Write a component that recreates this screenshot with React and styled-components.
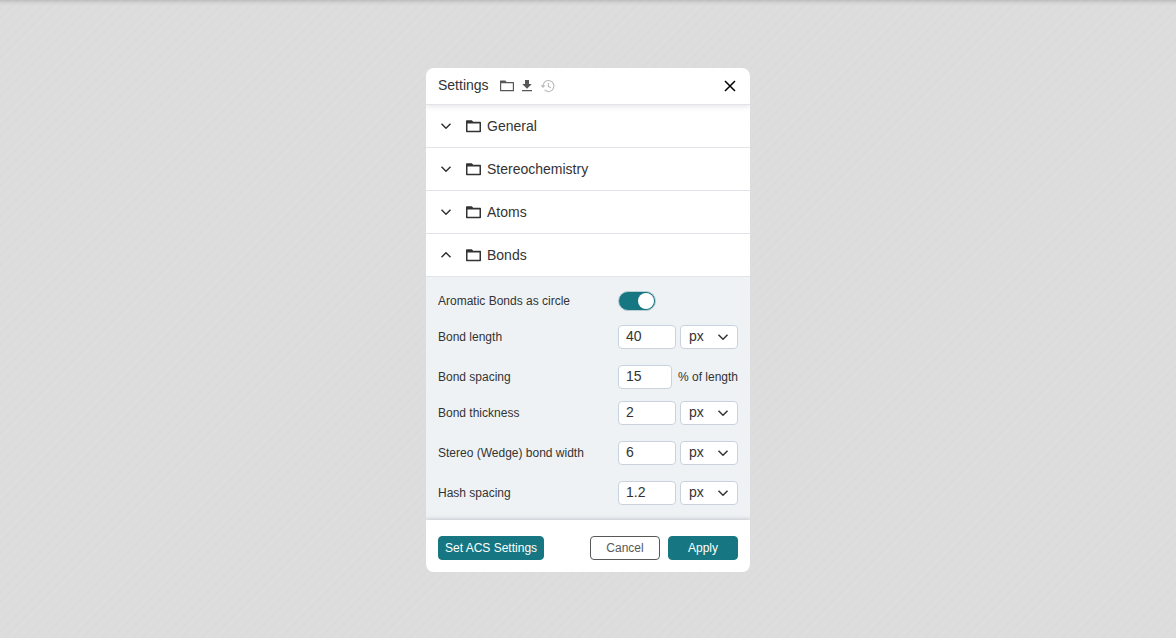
import React, { useState } from "react";
import styled, { createGlobalStyle } from "styled-components";

const ink = "#333333";
const teal = "#167782";
const line = "#e1e5ea";

const GlobalStyle = createGlobalStyle`
  *, *::before, *::after { box-sizing: border-box; }
  body {
    margin: 0;
    font-family: "Liberation Sans", Arial, sans-serif;
    color: ${ink};
  }
  button, input, select { font-family: inherit; color: inherit; margin: 0; }
`;

const Backdrop = styled.main`
  min-height: 100vh;
  display: flex;
  align-items: center;
  justify-content: center;
  padding: 26px 24px 24px;
  background:
    linear-gradient(rgba(0, 0, 0, 0.14), rgba(0, 0, 0, 0.04) 3px, transparent 6px),
    repeating-linear-gradient(
      135deg,
      #dddddd 0,
      #dddddd 4px,
      #dbdbdb 5px,
      #dbdbdb 6px,
      #dddddd 7px
    );
`;

const Dialog = styled.section`
  width: 324px;
  max-width: 100%;
  background: #ffffff;
  border-radius: 8px;
  overflow: hidden;
`;

const Header = styled.header`
  position: relative;
  display: flex;
  align-items: center;
  gap: 11px;
  padding: 0 12px;
  height: 37px;
  border-bottom: 1px solid ${line};
  box-shadow: 0 2px 5px rgba(103, 104, 132, 0.15);
`;

const Title = styled.h1`
  margin: 0;
  padding-bottom: 2px;
  font-size: 14px;
  line-height: 16px;
  font-weight: 400;
`;

const Tools = styled.div`
  display: flex;
  flex: 1;
  gap: 6px;
`;

const IconButton = styled.button`
  display: flex;
  padding: 0;
  border: 0;
  background: none;
  cursor: pointer;
  color: ${(p) => p.$color || "#585858"};
`;

const SectionToggle = styled.button`
  display: flex;
  align-items: center;
  width: 100%;
  height: 43px;
  padding: 0 12px;
  border: 0;
  border-bottom: 1px solid ${line};
  background: none;
  font-size: 14px;
  line-height: 16px;
  text-align: left;
  cursor: pointer;

  svg:first-child { margin: 0 12px 0 0; }
  span { padding-left: 6px; }
`;

const Fields = styled.div`
  display: flex;
  flex-direction: column;
  gap: 12px;
  padding: 12px 12px 11px;
  background: #eff2f5;
`;

const Row = styled.div`
  display: flex;
  align-items: flex-start;
  min-height: ${(p) => (p.$measure ? 28 : 24)}px;
`;

const Label = styled.label`
  flex: 1;
  font-size: 12px;
  line-height: 24px;
`;

const Controls = styled.div`
  display: flex;
  width: 120px;
  gap: ${(p) => p.$gap || 4}px;
`;

const NumberBox = styled.input`
  width: ${(p) => p.$width || 58}px;
  height: 24px;
  padding: 0 7px 2px;
  border: 1px solid #cad3dd;
  border-radius: 4px;
  background: #ffffff;
  font-size: 14px;
  outline: none;
`;

const SelectWrap = styled.div`
  position: relative;
  width: 58px;

  svg {
    position: absolute;
    right: 7px;
    top: 4px;
    pointer-events: none;
  }
`;

const Select = styled.select`
  appearance: none;
  display: block;
  width: 100%;
  height: 24px;
  padding: 0 24px 2px 8px;
  border: 1px solid #cad3dd;
  border-radius: 4px;
  background: #ffffff;
  font-size: 14px;
  outline: none;
`;

const Suffix = styled.span`
  font-size: 12px;
  line-height: 24px;
  white-space: nowrap;
`;

const Switch = styled.input`
  appearance: none;
  display: flex;
  align-items: center;
  width: 38px;
  height: 20px;
  margin: 2px 0 0;
  padding: 1px;
  border: 1px solid #b9cdd4;
  border-radius: 10px;
  background: #9aa5ad;
  cursor: pointer;

  &::before {
    content: "";
    width: 16px;
    height: 16px;
    border-radius: 50%;
    background: #ffffff;
  }

  &:checked {
    justify-content: flex-end;
    background: ${teal};
  }
`;

const Footer = styled.footer`
  position: relative;
  display: flex;
  gap: 8px;
  padding: 16px 12px 12px;
  background: #ffffff;
  box-shadow: 0 -1px 4px rgba(60, 70, 90, 0.25);
`;

const Button = styled.button`
  height: 24px;
  min-width: 70px;
  padding: 0 6px;
  border: 1px solid ${(p) => (p.$outline ? "#585858" : teal)};
  border-radius: 4px;
  background: ${(p) => (p.$outline ? "#ffffff" : teal)};
  color: ${(p) => (p.$outline ? "#585858" : "#ffffff")};
  font-size: 12px;
  line-height: 14px;
  cursor: pointer;
`;

const Spacer = styled.div`
  flex: 1;
`;

const Chevron = ({ up }) => (
  <svg width="16" height="16" viewBox="0 0 16 16" fill="none" stroke="currentColor" strokeWidth="1.5" aria-hidden="true">
    <path d={up ? "M3.5 10.2 8 5.7l4.5 4.5" : "M3.5 5.8 8 10.3l4.5-4.5"} />
  </svg>
);

const FolderIcon = () => (
  <svg width="15" height="16" viewBox="0 0 15 16" aria-hidden="true">
    <path
      fill="currentColor"
      fillRule="evenodd"
      d="M.8 2.200h5l1.400 1.600h7a.8.8 0 0 1 .8.8v8.800a.8.8 0 0 1-.8.8H.8a.8.8 0 0 1-.8-.8V3a.8.8 0 0 1 .8-.8ZM1.500 5.500v7.200h12V5.500Z"
    />
  </svg>
);

const OpenIcon = () => (
  <svg width="14" height="16" viewBox="0 0 14 16" aria-hidden="true">
    <path
      fill="currentColor"
      fillRule="evenodd"
      d="M.6 2.600h4.700l1.300 1.400h6.800a.6.6 0 0 1 .6.6v8.100a.6.6 0 0 1-.6.6H.6a.6.6 0 0 1-.6-.6V3.200a.6.6 0 0 1 .6-.6ZM1.200 5.200v6.900h11.600V5.200Z"
    />
  </svg>
);

const SaveIcon = () => (
  <svg width="14" height="16" viewBox="0 0 14 16" fill="currentColor" aria-hidden="true">
    <path d="M5 2h4v4h2.800L7 10.800 2.200 6H5ZM2 12h10v1.300H2Z" />
  </svg>
);

const HistoryIcon = () => (
  <svg width="16" height="16" viewBox="0 0 16 16" fill="none" stroke="currentColor" strokeWidth="1.200" aria-hidden="true">
    <path d="M3 8a5.500 5.500 0 1 1 1.600 3.900M8.400 5v3.300l2.400 1.400" />
    <path d="M.4 7.200h5.200L3 9.900Z" fill="currentColor" stroke="none" />
  </svg>
);

const CloseIcon = () => (
  <svg width="16" height="16" viewBox="0 0 16 16" fill="none" stroke="currentColor" strokeWidth="1.500" aria-hidden="true">
    <path d="m3 3 10 10M13 3 3 13" />
  </svg>
);

const sections = ["General", "Stereochemistry", "Atoms", "Bonds"];

const fields = [
  { id: "length", label: "Bond length", value: "40" },
  { id: "spacing", label: "Bond spacing", value: "15", suffix: "% of length" },
  { id: "thickness", label: "Bond thickness", value: "2" },
  { id: "wedge", label: "Stereo (Wedge) bond width", value: "6" },
  { id: "hash", label: "Hash spacing", value: "1.2" },
];

const MeasureRow = ({ id, label, value, suffix }) => (
  <Row $measure={!suffix}>
    <Label htmlFor={id}>{label}</Label>
    <Controls $gap={suffix ? 6 : 4}>
      <NumberBox id={id} defaultValue={value} $width={suffix ? 54 : 58} />
      {suffix ? (
        <Suffix>{suffix}</Suffix>
      ) : (
        <SelectWrap>
          <Select aria-label={`${label} unit`} defaultValue="px">
            <option>px</option>
            <option>cm</option>
            <option>pt</option>
            <option>inch</option>
          </Select>
          <Chevron />
        </SelectWrap>
      )}
    </Controls>
  </Row>
);

export default function App() {
  const [open, setOpen] = useState("Bonds");
  return (
    <>
      <GlobalStyle />
      <Backdrop>
        <Dialog role="dialog" aria-labelledby="settings-title">
          <Header>
            <Title id="settings-title">Settings</Title>
            <Tools>
              <IconButton aria-label="Open from file"><OpenIcon /></IconButton>
              <IconButton aria-label="Save to file"><SaveIcon /></IconButton>
              <IconButton aria-label="Reset" $color="#bcbcbc"><HistoryIcon /></IconButton>
            </Tools>
            <IconButton aria-label="Close" $color="#000000"><CloseIcon /></IconButton>
          </Header>
          {sections.map((name) => (
            <SectionToggle
              key={name}
              aria-expanded={open === name}
              onClick={() => setOpen(open === name ? "" : name)}
            >
              <Chevron up={open === name} />
              <FolderIcon />
              <span>{name}</span>
            </SectionToggle>
          ))}
          {open === "Bonds" && (
            <Fields>
              <Row>
                <Label htmlFor="aromatic">Aromatic Bonds as circle</Label>
                <Controls>
                  <Switch id="aromatic" type="checkbox" role="switch" defaultChecked />
                </Controls>
              </Row>
              {fields.map((f) => (
                <MeasureRow key={f.id} {...f} />
              ))}
            </Fields>
          )}
          <Footer>
            <Button>Set ACS Settings</Button>
            <Spacer />
            <Button $outline>Cancel</Button>
            <Button>Apply</Button>
          </Footer>
        </Dialog>
      </Backdrop>
    </>
  );
}
